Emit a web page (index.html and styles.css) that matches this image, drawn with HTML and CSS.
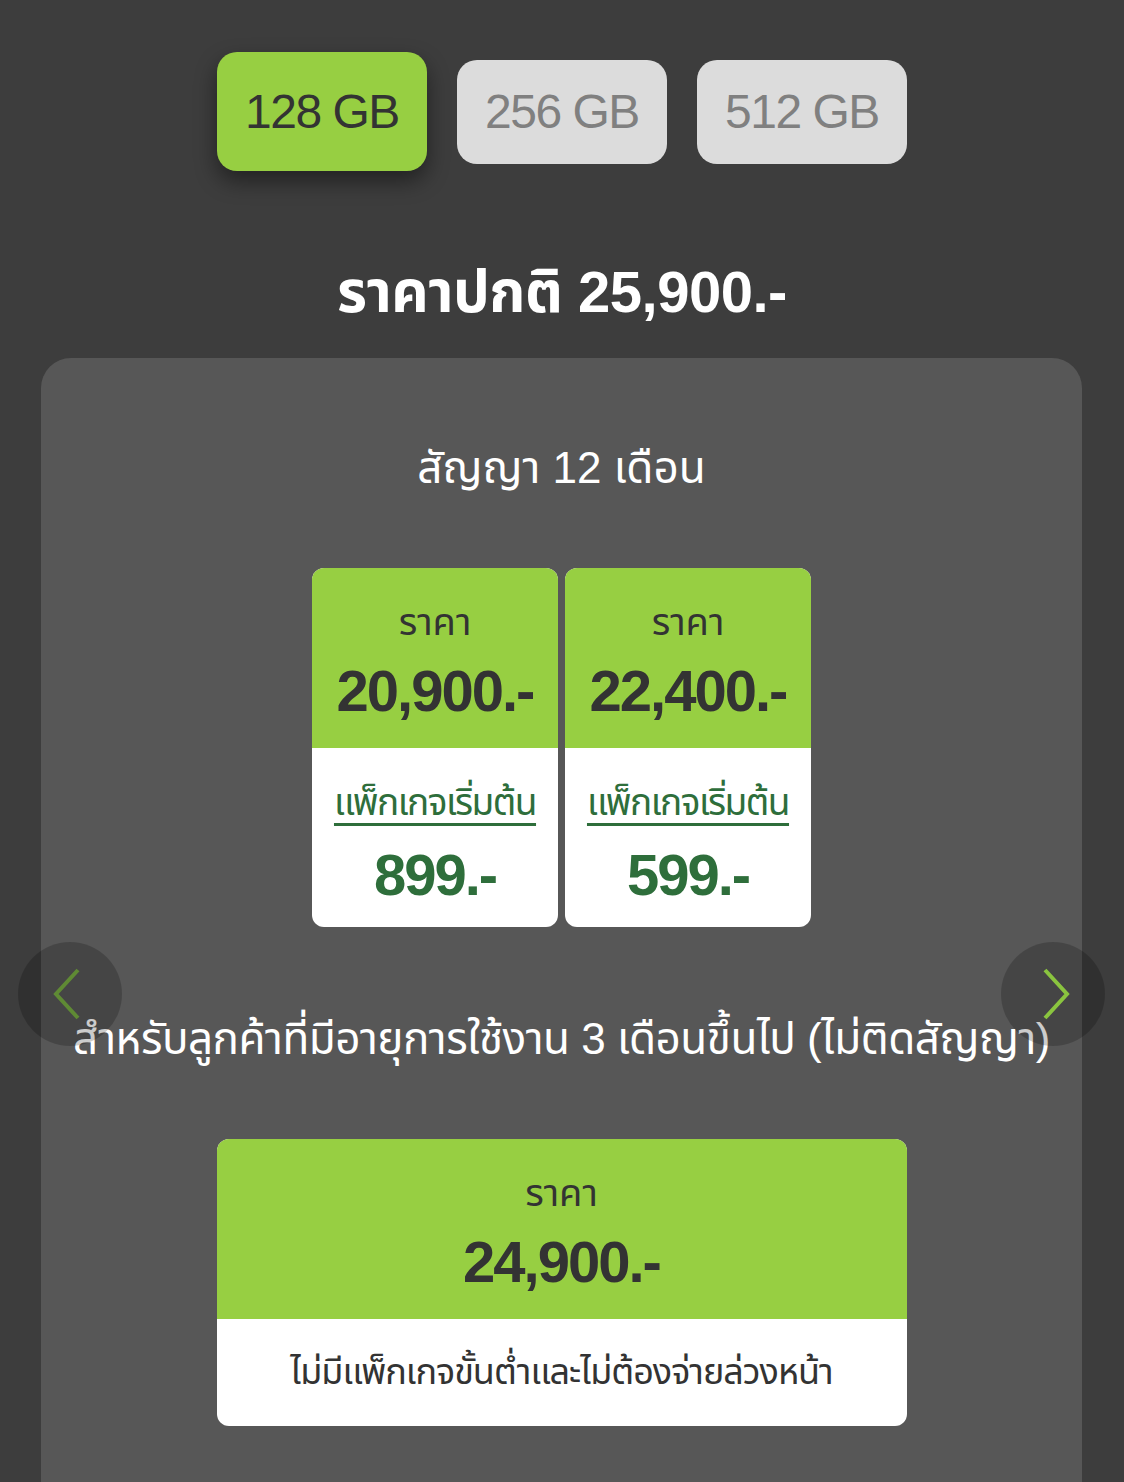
FILE: index.html
```html
<!DOCTYPE html>
<html lang="th">
<head>
  <meta charset="UTF-8" />
  <title>ราคา</title>
  <link rel="stylesheet" href="styles.css">
</head>
<body>
  <!-- Storage options -->
  <div class="sizes">
    <div class="size-btn active">128 GB</div>
    <div class="size-btn">256 GB</div>
    <div class="size-btn">512 GB</div>
  </div>

  <h1 class="normal-price">ราคาปกติ 25,900.-</h1>

  <!-- Price panel -->
  <div class="panel">
    <h2 class="panel-title">สัญญา 12 เดือน</h2>

    <div class="cards">
      <div class="card">
        <div class="card-top">
          <div class="label">ราคา</div>
          <div class="price">20,900.-</div>
        </div>
        <div class="card-bottom">
          <a class="pkg-link" href="#">แพ็กเกจเริ่มต้น</a>
          <div class="pkg-price">899.-</div>
        </div>
      </div>
      <div class="card">
        <div class="card-top">
          <div class="label">ราคา</div>
          <div class="price">22,400.-</div>
        </div>
        <div class="card-bottom">
          <a class="pkg-link" href="#">แพ็กเกจเริ่มต้น</a>
          <div class="pkg-price">599.-</div>
        </div>
      </div>
    </div>

    <h2 class="panel-title second">สำหรับลูกค้าที่มีอายุการใช้งาน 3 เดือนขึ้นไป (ไม่ติดสัญญา)</h2>

    <div class="card wide">
      <div class="card-top">
        <div class="label">ราคา</div>
        <div class="price">24,900.-</div>
      </div>
      <div class="card-bottom note">ไม่มีแพ็กเกจขั้นต่ำและไม่ต้องจ่ายล่วงหน้า</div>
    </div>
  </div>

  <!-- Carousel arrows -->
  <button class="arrow prev" aria-label="ก่อนหน้า">
    <svg viewBox="0 0 40 60" width="40" height="60"><polyline points="28,6 6,30 28,54" /></svg>
  </button>
  <button class="arrow next" aria-label="ถัดไป">
    <svg viewBox="0 0 40 60" width="40" height="60"><polyline points="12,6 34,30 12,54" /></svg>
  </button>
</body>
</html>
```

FILE: styles.css
```css
/* ---- Global ---- */
html, body {
  margin: 0;
  padding: 0;
  background: #3d3d3d;
  font-family: "Liberation Sans", "Noto Sans Thai", Loma, Garuda, sans-serif;
  color: #ffffff;
  height: 1482px;
  overflow: hidden;
}
body {
  position: relative;
}

/* ---- Storage buttons ---- */
.sizes {
  display: flex;
  justify-content: center;
  align-items: center;
  gap: 30px;
  padding-top: 52px;
  height: 119px;
}
.size-btn {
  width: 210px;
  height: 104px;
  border-radius: 20px;
  background: #dcdcdc;
  color: #808080;
  font-size: 48px;
  letter-spacing: -1.5px;
  display: flex;
  align-items: center;
  justify-content: center;
}
.size-btn.active {
  height: 119px;
  background: #97cf42;
  color: #333333;
  box-shadow: 0 10px 22px rgba(0, 0, 0, 0.45);
}

/* ---- Title ---- */
.normal-price {
  margin: 0;
  padding-top: 86px;
  height: 101px;
  text-align: center;
  font-size: 58px;
  line-height: 70px;
  font-weight: 700;
  letter-spacing: -0.5px;
}

/* ---- Panel ---- */
.panel {
  margin: 0 42px 0 41px;
  background: #575757;
  border-radius: 30px 30px 0 0;
  padding: 80px 0 0;
  height: 1124px; /* runs to the bottom edge */
  box-sizing: border-box;
  display: flex;
  flex-direction: column;
  align-items: center;
}
.panel-title {
  margin: 0;
  font-weight: 400;
  font-size: 44px;
  line-height: 60px;
  text-align: center;
}
.panel-title.second {
  margin-top: 82px;
  letter-spacing: -0.5px;
}

.cards {
  display: flex;
  gap: 7px;
  margin-top: 70px;
}
.card {
  width: 246px;
  border-radius: 12px;
  overflow: hidden;
  background: #ffffff;
}
.card-top {
  background: #97cf42;
  color: #333333;
  height: 180px;
  display: flex;
  flex-direction: column;
  align-items: center;
  padding-top: 28px;
  box-sizing: border-box;
}
.label {
  font-size: 38px;
  line-height: 52px;
}
.price {
  font-size: 58px;
  font-weight: 700;
  line-height: 70px;
  margin-top: 8px;
  letter-spacing: -2px;
}
.card-bottom {
  height: 179px;
  display: flex;
  flex-direction: column;
  align-items: center;
  padding-top: 28px;
  box-sizing: border-box;
  color: #2e6e3b;
}
.pkg-link {
  color: #2e6e3b;
  font-size: 37px;
  line-height: 54px;
  letter-spacing: -1.5px;
  text-decoration: underline;
  text-decoration-thickness: 3px;
  text-underline-offset: 8px;
}
.pkg-price {
  font-size: 58px;
  font-weight: 700;
  line-height: 70px;
  margin-top: 10px;
  letter-spacing: -2px;
}

.card.wide {
  width: 690px;
  margin-top: 70px;
}
.card-bottom.note {
  height: 107px;
  padding-top: 0;
  justify-content: center;
  color: #333333;
  font-size: 36px;
  letter-spacing: -1px;
}

/* ---- Arrows ---- */
.arrow {
  position: absolute;
  top: 942px;
  width: 104px;
  height: 104px;
  border-radius: 50%;
  border: none;
  background: rgba(0, 0, 0, 0.2);
  display: flex;
  align-items: center;
  justify-content: center;
  padding: 0;
}
.arrow.prev { left: 18px; }
.arrow.next { left: 1001px; }
.arrow polyline {
  fill: none;
  stroke: #8ac43f;
  stroke-width: 4;
}
.arrow.prev polyline { stroke: #5f8a34; }
```
